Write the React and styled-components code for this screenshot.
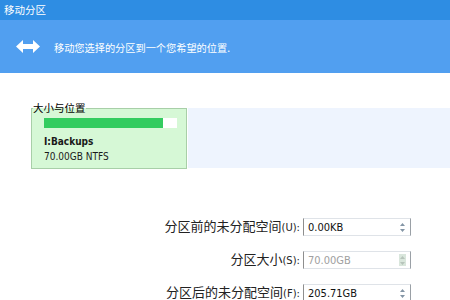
import React from 'react';
import styled, { createGlobalStyle } from 'styled-components';

const GlobalStyle = createGlobalStyle`
  html, body {
    margin: 0;
    padding: 0;
    background: #ffffff;
  }
  body {
    width: 450px;
    height: 300px;
    overflow: hidden;
    font-family: "Noto Sans CJK SC", "DejaVu Sans", sans-serif;
  }
`;

const Window = styled.div`
  width: 450px;
  height: 300px;
  overflow: hidden;
  display: flex;
  flex-direction: column;
  background: #ffffff;

  & > * {
    flex-shrink: 0;
  }
`;

const TitleBar = styled.div`
  height: 20px;
  display: flex;
  align-items: center;
  padding-left: 4px;
  background: #2e8de3;
  color: #ffffff;
  font-size: 10.5px;
  line-height: 1;
`;

const Header = styled.div`
  height: 53px;
  display: flex;
  align-items: center;
  gap: 14px;
  padding-left: 16px;
  background: #519ff0;
  color: #ffffff;
  font-size: 10.2px;
`;

const HeaderText = styled.span`
  padding-top: 1px;
`;

const MapRow = styled.div`
  display: flex;
  margin: 28px 0 0 31px;
  height: 68px;
`;

const PartitionCard = styled.fieldset`
  box-sizing: border-box;
  width: 156px;
  margin: 0;
  padding: 0 0 0 12px;
  border: 1px solid #a8cfa8;
  background: #d6f8d6;
  display: flex;
  flex-direction: column;
`;

const Legend = styled.legend`
  padding: 0;
  margin-left: -11px;
  font-size: 10.5px;
  line-height: 14px;
  color: #000000;
`;

const Bar = styled.div`
  width: 133px;
  height: 10px;
  margin-top: 3px;
  background: #ffffff;
  display: flex;
`;

const BarFill = styled.div`
  height: 100%;
  background: #33cc5f;
`;

const PartName = styled.div`
  margin-top: 7px;
  font-family: "DejaVu Sans Condensed", "DejaVu Sans", sans-serif;
  font-weight: bold;
  font-size: 10px;
  line-height: 14px;
  color: #1a1a1a;
`;

const PartInfo = styled.div`
  margin-top: 1px;
  font-family: "DejaVu Sans Condensed", "DejaVu Sans", sans-serif;
  font-size: 10px;
  line-height: 14px;
  color: #1a1a1a;
`;

const FreeSpace = styled.div`
  flex: 1;
  margin-top: 7px;
  margin-left: 1px;
  margin-bottom: 1px;
  background: #eef4fe;
`;

const Form = styled.div`
  display: flex;
  flex-direction: column;
  gap: 15px;
  margin-top: 48px;
`;

const Row = styled.div`
  display: grid;
  grid-template-columns: 300px 108px;
  column-gap: 3px;
  align-items: center;
  height: 18px;
`;

const Label = styled.label`
  text-align: right;
  font-size: 13px;
  line-height: 18px;
  color: #222222;
  white-space: nowrap;
`;

const Key = styled.span`
  font-family: "DejaVu Sans", sans-serif;
  font-size: 10px;
`;

const SpinBox = styled.div`
  height: 18px;
  box-sizing: border-box;
  display: flex;
  align-items: center;
  justify-content: space-between;
  padding: 0 4px 0 4px;
  border: 1px solid #dfe3e8;
  border-left-color: #8e8e8e;
  border-right-color: #9aa0a6;
  background: #ffffff;
  font-family: "DejaVu Sans Condensed", "DejaVu Sans", sans-serif;
  font-size: 11px;
  color: ${(p) => (p.disabled ? '#a0a0a0' : '#111111')};
`;

const Spinner = styled.div`
  width: 7px;
  height: 12px;
  display: flex;
  align-items: center;
  justify-content: center;
  background: ${(p) => (p.disabled ? '#d9e6dc' : 'transparent')};
`;

const ArrowIcon = () => (
  <svg width="24" height="13" viewBox="0 0 24 13">
    <path
      d="M0 6.5 L7 0 L7 4 L17 4 L17 0 L24 6.5 L17 13 L17 9 L7 9 L7 13 Z"
      fill="#ffffff"
    />
  </svg>
);

const SpinGlyph = ({ disabled }) => (
  <svg width="5" height="9" viewBox="0 0 5 9">
    <path d="M2.5 0 L5 3 L0 3 Z M0 6 L5 6 L2.5 9 Z" fill={disabled ? '#b7c4bb' : '#8496a6'} />
  </svg>
);

const fields = [
  { label: '分区前的未分配空间', key: 'U', value: '0.00KB' },
  { label: '分区大小', key: 'S', value: '70.00GB', disabled: true },
  { label: '分区后的未分配空间', key: 'F', value: '205.71GB' },
];

export default function App() {
  return (
    <Window>
      <GlobalStyle />
      <TitleBar>移动分区</TitleBar>
      <Header>
        <ArrowIcon />
        <HeaderText>移动您选择的分区到一个您希望的位置.</HeaderText>
      </Header>
      <MapRow>
        <PartitionCard>
          <Legend>大小与位置</Legend>
          <Bar>
            <BarFill style={{ width: `${(70 / 78.5) * 100}%` }} />
          </Bar>
          <PartName>I:Backups</PartName>
          <PartInfo>70.00GB NTFS</PartInfo>
        </PartitionCard>
        <FreeSpace />
      </MapRow>
      <Form>
        {fields.map((f) => (
          <Row key={f.key}>
            <Label>
              {f.label}
              <Key>({f.key}):</Key>
            </Label>
            <SpinBox disabled={f.disabled}>
              <span>{f.value}</span>
              <Spinner disabled={f.disabled}>
                <SpinGlyph disabled={f.disabled} />
              </Spinner>
            </SpinBox>
          </Row>
        ))}
      </Form>
    </Window>
  );
}
